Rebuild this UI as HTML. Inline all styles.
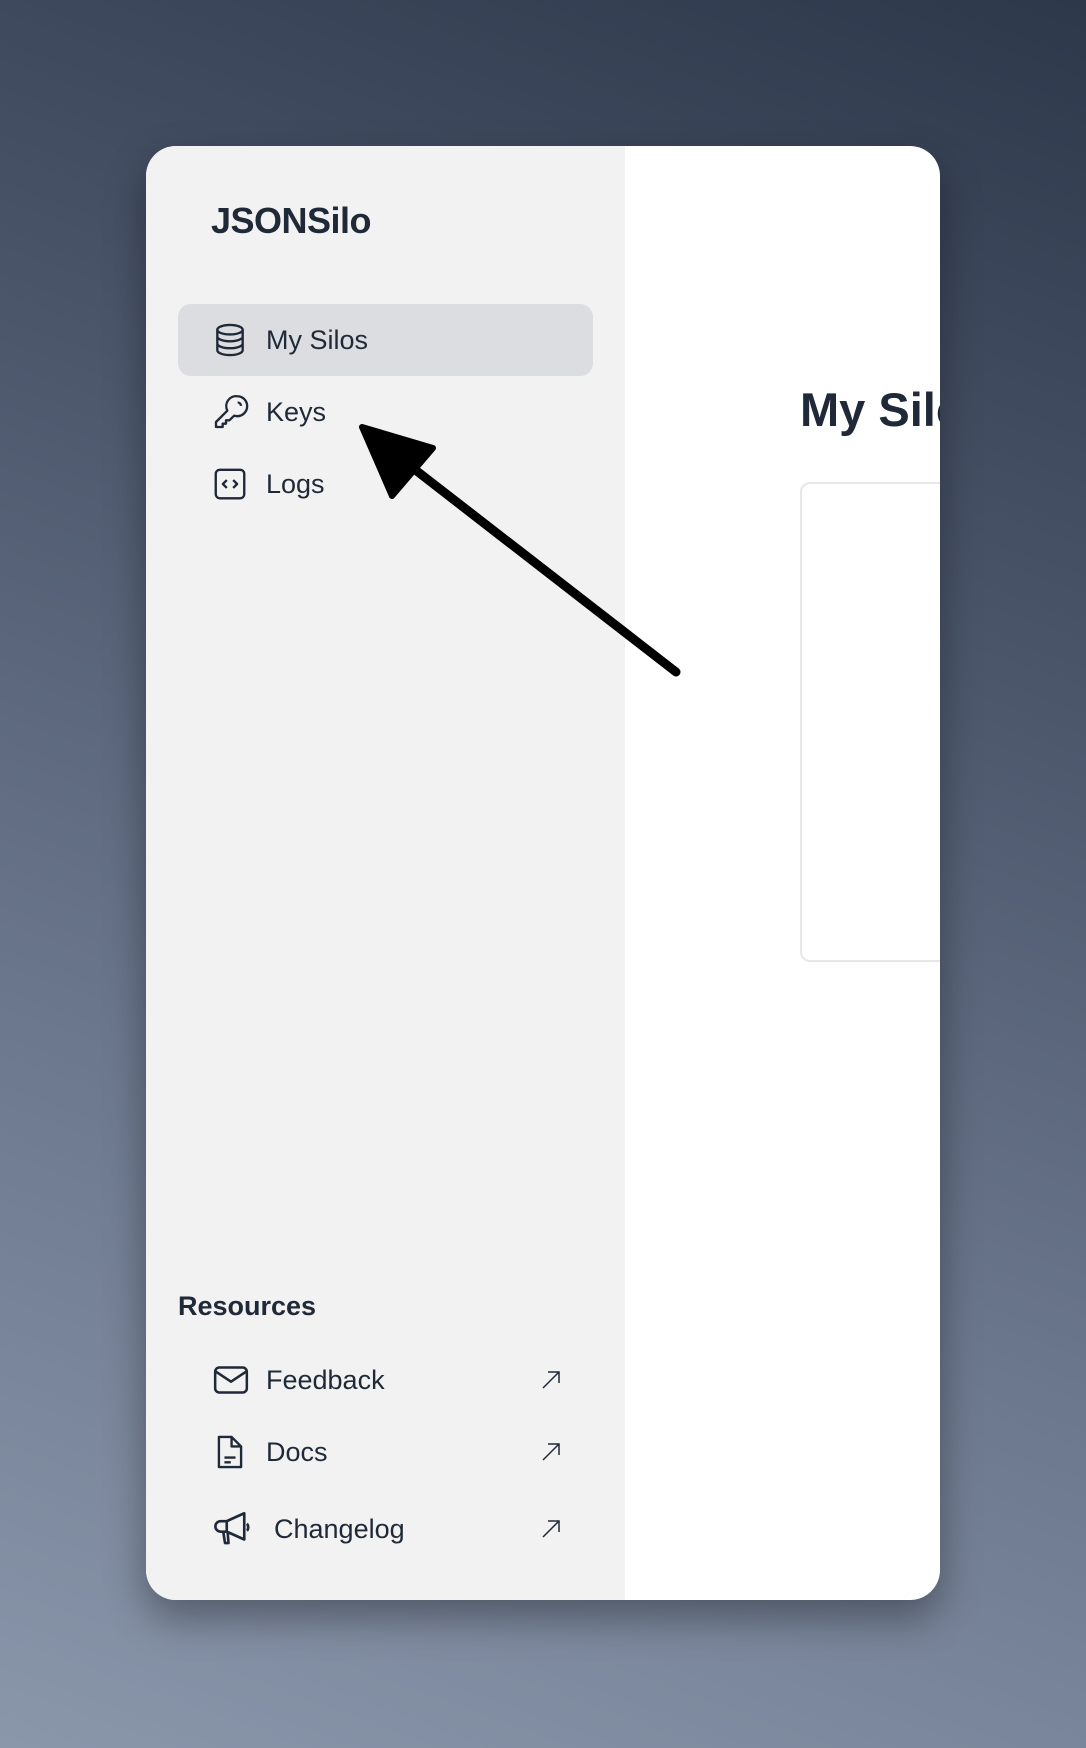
<!DOCTYPE html>
<html><head><meta charset="utf-8"><style>
*{margin:0;padding:0;box-sizing:border-box}
body{width:1086px;height:1748px;overflow:hidden;background:linear-gradient(200deg,#2e384b 0%,#4d586d 35%,#6b778d 65%,#8a96aa 100%);font-family:"Liberation Sans",sans-serif;color:#1f2937;position:relative}
.card{position:absolute;left:146px;top:146px;width:794px;height:1454px;border-radius:30px;background:#fff;overflow:hidden;box-shadow:0 18px 40px rgba(0,0,0,.35)}
.side{position:absolute;left:0;top:0;width:479px;height:100%;background:#f2f2f2}
.logo{position:absolute;left:65px;top:54px;font-size:36px;font-weight:bold;letter-spacing:-0.5px}
.item{position:absolute;left:32px;width:415px;height:72px;border-radius:13px;display:flex;align-items:center;font-size:27px}
.item svg{position:absolute;left:33px}
.item span{position:absolute;left:88px}
.act{background:#dcdde0}
.res{position:absolute;left:32px;top:1145px;font-size:27px;font-weight:bold}
.item svg.ext{left:362px}
h1{position:absolute;left:654px;top:236px;font-size:47px;font-weight:bold;white-space:nowrap}
.box{position:absolute;left:654px;top:336px;width:300px;height:480px;border:2px solid #e5e7eb;border-radius:10px}
</style></head><body>
<div class="card">
<div class="side">
<div class="logo">JSONSilo</div>
<div class="item act" style="top:158px"><svg width="38" height="38" viewBox="0 0 24 24" fill="none" stroke="#1f2937" stroke-width="1.5"><ellipse cx="12" cy="5.5" rx="8" ry="3"/><path d="M4 5.5v13c0 1.7 3.6 3 8 3s8-1.3 8-3v-13M4 9.8c0 1.7 3.6 3 8 3s8-1.3 8-3M4 14.2c0 1.7 3.6 3 8 3s8-1.3 8-3"/></svg><span>My Silos</span></div>
<div class="item" style="top:230px"><svg width="40" height="40" viewBox="0 0 24 24" fill="none" stroke="#1f2937" stroke-width="1.4" stroke-linejoin="round"><path d="M15.7 2.5a6 6 0 0 1 0 12c-.6 0-1.2-.1-1.8-.3L11 17h-2v2H7v2H3v-3l6.8-6.8A6 6 0 0 1 15.7 2.5zM16 6.3a2 2 0 0 1 2 2"/></svg><span>Keys</span></div>
<div class="item" style="top:302px"><svg width="38" height="38" viewBox="0 0 24 24" fill="none" stroke="#1f2937" stroke-width="1.5" stroke-linejoin="round"><rect x="3" y="3" width="18" height="18" rx="2.5"/><path d="M10 9.5 7.5 12l2.5 2.5M14 9.5l2.5 2.5-2.5 2.5"/></svg><span>Logs</span></div>
<div class="res">Resources</div>
<div class="item" style="top:1198px"><svg width="40" height="40" viewBox="0 0 24 24" fill="none" stroke="#1f2937" stroke-width="1.5" stroke-linejoin="round"><rect x="2.5" y="4.5" width="19" height="15" rx="2.5"/><path d="M3 7l9 6 9-6"/></svg><span>Feedback</span><svg class="ext" width="22" height="22" viewBox="0 0 22 22" fill="none" stroke="#1f2937" stroke-width="1.5"><path d="M3 19 19 3M8 3h11v11"/></svg></div>
<div class="item" style="top:1270px"><svg width="38" height="40" viewBox="0 0 24 24" fill="none" stroke="#1f2937" stroke-width="1.5" stroke-linejoin="round"><path d="M5 2.5h8l6 6v13H5zM13 2.5v6h6M8.5 15.5h7M8.5 18.5h4"/></svg><span>Docs</span><svg class="ext" width="22" height="22" viewBox="0 0 22 22" fill="none" stroke="#1f2937" stroke-width="1.5"><path d="M3 19 19 3M8 3h11v11"/></svg></div>
<div class="item" style="top:1347px"><svg width="42" height="42" viewBox="0 0 24 24" fill="none" stroke="#1f2937" stroke-width="1.5" stroke-linejoin="round"><path d="M19 3 9 7.5H5.5a3 3 0 0 0 0 6H9l10 4.5zM9 7.5v6M7 13.5l1 6.5h2l-.5-6.3M20.5 9c1 .8 1 3.2 0 4"/></svg><span style="left:96px">Changelog</span><svg class="ext" width="22" height="22" viewBox="0 0 22 22" fill="none" stroke="#1f2937" stroke-width="1.5"><path d="M3 19 19 3M8 3h11v11"/></svg></div>
</div>
<h1>My Silos</h1>
<div class="box"></div>
</div>
<svg width="1086" height="1748" style="position:absolute;left:0;top:0" viewBox="0 0 1086 1748">
<path d="M400 458 L676 672" stroke="#000" stroke-width="9" stroke-linecap="round"/>
<path d="M362 427 L433 448 L392 496 Z" fill="#000" stroke="#000" stroke-width="6" stroke-linejoin="round"/>
</svg>
</body></html>
